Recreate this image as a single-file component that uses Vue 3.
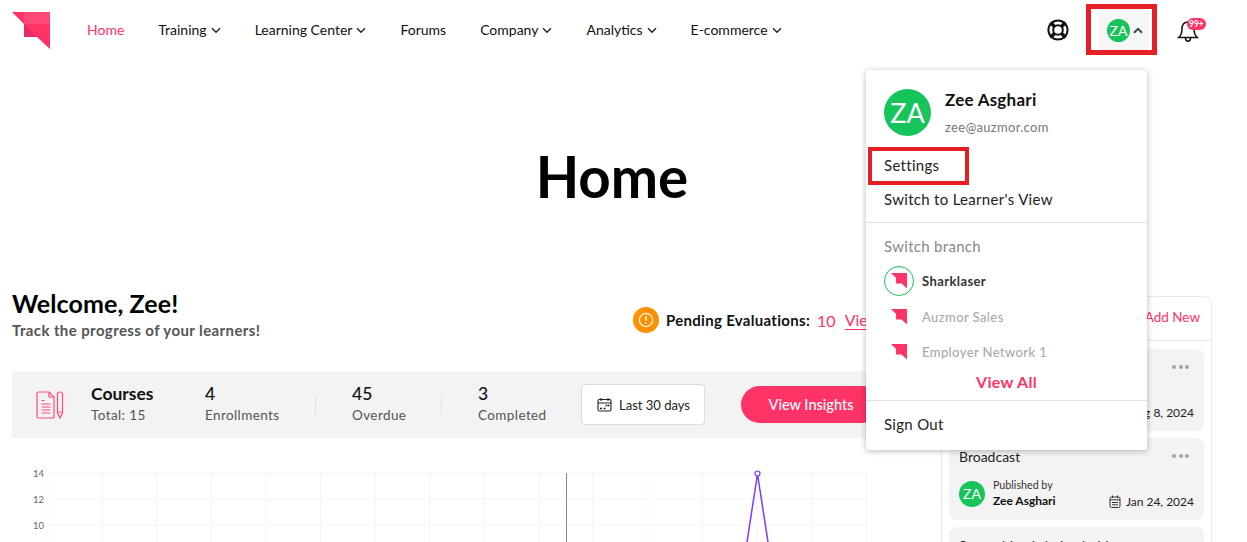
<script setup>
const menu = [
  { label: 'Home', active: true },
  { label: 'Training', arrow: true },
  { label: 'Learning Center', arrow: true },
  { label: 'Forums' },
  { label: 'Company', arrow: true },
  { label: 'Analytics', arrow: true },
  { label: 'E-commerce', arrow: true },
]

const stats = [
  { value: '4', label: 'Enrollments', cls: 's1' },
  { value: '45', label: 'Overdue', cls: 's2' },
  { value: '3', label: 'Completed', cls: 's3' },
]

const posts = [
  { title: 'Announcement', date: 'Aug 8, 2024' },
  { title: 'Broadcast', date: 'Jan 24, 2024' },
  { title: 'Some thing is being held', date: 'Jan 12, 2024' },
]

const xLines = [48, 102.5, 157, 211, 266, 320.5, 375, 429.5, 484, 539, 593, 648, 702.5, 757, 812, 866.5]
const yLines = [473, 499, 525]
const yLabels = [
  { y: 477, t: '14' },
  { y: 503, t: '12' },
  { y: 529, t: '10' },
]
</script>

<template>
  <div class="page">
    <header class="nav">
      <svg class="logo" width="38" height="38" viewBox="0 0 38 38">
        <polygon points="0,0 38,0 38,37 25,25 12,25 12,12" fill="#ff3366" />
        <polygon points="12,0 38,0 38,12 12,12" fill="#ff4a78" />
        <polygon points="12,12 25,25 12,25" fill="#e52c68" />
      </svg>
      <nav class="menu">
        <a v-for="m in menu" :key="m.label" class="menu-item" :class="{ active: m.active }">
          {{ m.label }}
          <svg v-if="m.arrow" width="10" height="7" viewBox="0 0 10 7"><path d="M1 1.200l4 4 4-4" fill="none" stroke="#222" stroke-width="1.400" /></svg>
        </a>
      </nav>
      <div class="tools">
        <svg class="buoy" width="22" height="22" viewBox="0 0 22 22" fill="none" stroke="#111" stroke-width="2">
          <circle cx="11" cy="11" r="9.600" />
          <circle cx="11" cy="11" r="4.800" />
          <path d="M3.500 3.500l4 4M18.500 3.500l-4 4M3.500 18.500l4-4M18.500 18.500l-4-4" stroke-width="3.600" />
        </svg>
        <div class="account">
          <span class="avatar small">ZA</span>
          <svg width="10" height="7" viewBox="0 0 10 7"><path d="M1 5.800l4-4 4 4" fill="none" stroke="#444" stroke-width="2" /></svg>
          <span class="mark mark-account"></span>
        </div>
        <div class="bell">
          <svg width="22" height="26" viewBox="0 0 22 26" fill="none" stroke="#111" stroke-width="1.500">
            <path d="M11 3C6.800 3 5 6.200 5 10c0 4-1 6.500-3.300 8.500h18.600C18 16.500 17 14 17 10c0-3.800-1.800-7-6-7z" />
            <path d="M8.500 19c0 2 1.100 3.200 2.500 3.200s2.500-1.200 2.500-3.200" />
          </svg>
          <span class="badge">99+</span>
        </div>
      </div>
    </header>

    <h1 class="title">Home</h1>

    <main class="content">
      <section class="left">
        <div class="welcome">
          <div>
            <h2>Welcome, Zee!</h2>
            <p>Track the progress of your learners!</p>
          </div>
          <div class="pending">
            <span class="warn">
              <svg width="16" height="16" viewBox="0 0 16 16" fill="none" stroke="#fff" stroke-width="1.200">
                <circle cx="8" cy="8" r="6.600" />
                <path d="M8 4.200v4.600M8 10.600v1.200" stroke-width="1.500" />
              </svg>
            </span>
            <b>Pending Evaluations:</b>
            <span class="count">10</span>
            <a class="view">View All</a>
          </div>
        </div>

        <div class="banner">
          <svg class="doc" width="28" height="28" viewBox="0 0 28 28" fill="none" stroke="#ff4d78" stroke-width="1.200">
            <path d="M1 2.500Q1 1 2.500 1H13l5 5v20q0 1-1 1H2.500Q1 27 1 25.500z" />
            <path d="M13 1v5h5" />
            <path d="M5.500 9.500h3M5.500 13h9M5.500 16h9M5.500 19h9M5.500 22h9" />
            <path d="M21.500 3q0-2 2.500-2t2.500 2v19l-2.500 5-2.500-5zM21.500 21h5" />
          </svg>
          <div class="total">
            <strong>Courses</strong>
            <span>Total: 15</span>
          </div>
          <div v-for="s in stats" :key="s.label" class="stat" :class="s.cls">
            <strong>{{ s.value }}</strong>
            <span>{{ s.label }}</span>
          </div>
          <button class="range">
            <svg width="15" height="15" viewBox="0 0 15 15" fill="none" stroke="#222" stroke-width="1.100">
              <rect x="1" y="2.500" width="13" height="11.500" rx="1.500" />
              <path d="M1 6h13M4 1v3M11 1v3" />
              <path d="M3 11.500h2M6.500 11.500h2M8.500 8.500h2M11 8.500h1.500" stroke-width="1.400" />
            </svg>
            Last 30 days
          </button>
          <button class="insights">View Insights</button>
        </div>

        <svg class="chart" width="917" height="92" viewBox="12 463 917 92">
          <line v-for="x in xLines" :key="x" :x1="x" :x2="x" y1="473" y2="555" stroke="#f4f4f4" />
          <line v-for="y in yLines" :key="y" x1="48" x2="867" :y1="y" :y2="y" stroke="#f4f4f4" />
          <line x1="566.500" x2="566.500" y1="473" y2="555" stroke="#888" />
          <text v-for="l in yLabels" :key="l.t" x="44" :y="l.y" text-anchor="end" class="tick">{{ l.t }}</text>
          <path d="M745 555L757.500 474L770 555" fill="none" stroke="#7c3aff" stroke-width="1.500" />
          <circle cx="757.500" cy="473.500" r="2.500" fill="#fff" stroke="#7c3aff" stroke-width="1.200" />
        </svg>
      </section>

      <aside class="panel">
        <div class="panel-head"><a>Add New</a></div>
        <div class="cards">
          <article v-for="p in posts" :key="p.title" class="card">
            <div class="card-top">
              <span>{{ p.title }}</span>
              <i class="dots"><b></b><b></b><b></b></i>
            </div>
            <div class="card-foot">
              <span class="avatar tiny">ZA</span>
              <div class="by">
                <small>Published by</small>
                <strong>Zee Asghari</strong>
              </div>
              <div class="date">
                <svg width="12" height="13" viewBox="0 0 12 13" fill="none" stroke="#333" stroke-width="1">
                  <rect x="1" y="2" width="10" height="10.500" rx="1.500" />
                  <path d="M1 4.800h10M3.500 .5v2.500M8.500 .5v2.500M3 7.500h6M3 9.800h6" />
                </svg>
                {{ p.date }}
              </div>
            </div>
          </article>
        </div>
      </aside>
    </main>

    <div class="dropdown">
      <div class="who">
        <span class="avatar big">ZA</span>
        <div>
          <div class="who-name">Zee Asghari</div>
          <div class="who-mail">zee@auzmor.com</div>
        </div>
      </div>
      <a class="row settings">Settings<span class="mark mark-settings"></span></a>
      <a class="row">Switch to Learner's View</a>
      <hr />
      <div class="row muted">Switch branch</div>
      <div class="branch current">
        <span class="branch-logo ring">
          <svg width="16" height="16" viewBox="0 0 38 38"><polygon points="0,0 38,0 38,37 25,25 12,25 12,12" fill="#ff3366" /></svg>
        </span>
        Sharklaser
      </div>
      <div class="branch">
        <span class="branch-logo">
          <svg width="16" height="16" viewBox="0 0 38 38"><polygon points="0,0 38,0 38,37 25,25 12,25 12,12" fill="#ff3366" /></svg>
        </span>
        Auzmor Sales
      </div>
      <div class="branch">
        <span class="branch-logo">
          <svg width="16" height="16" viewBox="0 0 38 38"><polygon points="0,0 38,0 38,37 25,25 12,25 12,12" fill="#ff3366" /></svg>
        </span>
        Employer Network 1
      </div>
      <a class="view-all">View All</a>
      <hr class="tight" />
      <a class="row signout">Sign Out</a>
    </div>
  </div>
</template>

<style scoped>
.page {
  position: relative;
  height: 542px;
  overflow: hidden;
  background: #fff;
  color: #111;
  font-family: Lato, "Open Sans", sans-serif;
  font-size: 14px;
}

.nav {
  display: flex;
  align-items: center;
  height: 60px;
  padding: 0 41px 0 12px;
}
.logo {
  margin-top: 1px;
}
.menu {
  display: flex;
  gap: 34px;
  margin-left: 37px;
  margin-bottom: 2px;
}
.menu-item {
  display: flex;
  align-items: center;
  gap: 4px;
  color: #111;
}
.menu-item svg {
  margin-top: 2px;
}
.menu-item.active {
  color: #ff3366;
}
.tools {
  display: flex;
  align-items: center;
  margin-left: auto;
}
.buoy {
  margin-right: 30px;
}
.account {
  position: relative;
  display: flex;
  align-items: center;
  gap: 3px;
  width: 50px;
  height: 42px;
  padding-left: 8px;
  box-sizing: border-box;
  background: #f6f6f6;
  border-radius: 5px;
}
.mark {
  position: absolute;
  border: 5px solid #e81e25;
  box-sizing: border-box;
}
.mark-account {
  left: -13px;
  top: -5px;
  width: 71px;
  height: 51px;
}
.bell {
  position: relative;
  display: flex;
  margin-top: 3px;
  margin-left: 28px;
  width: 29px;
}
.badge {
  position: absolute;
  left: 9.500px;
  top: -1px;
  padding: 0 2.500px;
  height: 12px;
  line-height: 12px;
  background: #ff3366;
  border-radius: 6px;
  color: #fff;
  font-size: 8.500px;
  font-weight: 700;
}

.avatar {
  display: inline-flex;
  flex-shrink: 0;
  align-items: center;
  justify-content: center;
  background: #16c45a;
  border-radius: 50%;
  color: #fff;
}
.avatar.small {
  width: 23px;
  height: 23px;
  font-size: 14px;
}
.avatar.tiny {
  width: 26px;
  height: 26px;
  font-size: 14px;
}
.avatar.big {
  width: 47px;
  height: 47px;
  font-size: 27px;
}

.title {
  width: 1224px;
  margin: 0;
  padding: 82px 0 77px;
  text-align: center;
  font-size: 56.500px;
  line-height: 68px;
  font-weight: 700;
  color: #000;
}

.content {
  display: flex;
  gap: 12px;
  padding: 0 35px 0 12px;
}
.left {
  width: 917px;
  flex-shrink: 0;
}
.welcome {
  display: flex;
  justify-content: space-between;
  align-items: flex-start;
  height: 84px;
}
.welcome h2 {
  margin: 0;
  padding-top: 1px;
  font-size: 25px;
  letter-spacing: 0.1px;
  line-height: 30px;
  font-weight: 700;
  color: #000;
}
.welcome p {
  margin: 2px 0 0;
  font-size: 15px;
  letter-spacing: 0.4px;
  font-weight: 700;
  line-height: 20px;
  color: #555;
}
.pending {
  display: flex;
  align-items: center;
  gap: 7px;
  width: 296px;
  margin-top: 20px;
  font-size: 15px;
}
.pending b {
  color: #111;
  letter-spacing: 0.3px;
}
.warn {
  display: flex;
  align-items: center;
  justify-content: center;
  width: 26px;
  height: 26px;
  background: #ff9100;
  border-radius: 50%;
}
.count {
  color: #ff3366;
  font-size: 16px;
}
.view {
  margin-left: 2px;
  color: #ff3366;
  font-size: 16px;
  border-bottom: 1px solid #ff3366;
  white-space: nowrap;
}

.banner {
  display: flex;
  align-items: center;
  height: 67px;
  padding-left: 24px;
  background: #f3f3f3;
}
.doc {
  flex-shrink: 0;
}
.total,
.stat {
  display: flex;
  flex-direction: column;
  gap: 3px;
  margin-bottom: 2px;
  box-sizing: border-box;
}
.total {
  width: 114px;
  margin-left: 27px;
}
.total strong,
.stat strong {
  font-size: 17.500px;
  line-height: 20px;
  font-weight: 500;
  color: #111;
}
.total strong {
  font-weight: 700;
}
.total span,
.stat span {
  font-size: 13.500px;
  letter-spacing: 0.4px;
  line-height: 17px;
  color: #555;
}
.s1 {
  width: 110px;
}
.s2,
.s3 {
  position: relative;
  padding-left: 37px;
}
.s2::before,
.s3::before {
  content: "";
  position: absolute;
  left: 0;
  top: 11px;
  height: 20px;
  border-left: 1px solid #e2e2e2;
}
.s2 {
  width: 126px;
}
.s3 {
  width: 140px;
}
.range {
  display: flex;
  align-items: center;
  gap: 7px;
  width: 124px;
  height: 41px;
  padding: 0 0 0 15px;
  background: #fff;
  border: 1px solid #dcdcdc;
  border-radius: 4px;
  color: #222;
  font: 13px Lato, sans-serif;
}
.insights {
  width: 140px;
  height: 37px;
  margin-left: 36px;
  padding: 0;
  background: #ff3366;
  border: 0;
  border-radius: 19px;
  color: #fff;
  font: 500 14.500px Lato, sans-serif;
}
.chart {
  display: block;
  margin-top: 25px;
}
.tick {
  font-size: 9.500px;
  fill: #666;
  font-family: Lato, sans-serif;
}

.panel {
  width: 271px;
  height: 400px;
  margin-top: 9px;
  box-sizing: border-box;
  border: 1px solid #e9e9e9;
  border-radius: 9px;
}
.panel-head {
  display: flex;
  align-items: center;
  justify-content: flex-end;
  height: 44px;
  padding: 0 11px 3px 0;
  box-sizing: border-box;
  border-bottom: 1px solid #e9e9e9;
  color: #ff3366;
  font-size: 13.500px;
}
.cards {
  display: flex;
  flex-direction: column;
  gap: 7px;
  padding: 8px 7px 0;
}
.card {
  height: 82px;
  padding: 9px 10px 0;
  box-sizing: border-box;
  background: #f3f3f3;
  border-radius: 8px;
}
.card-top {
  display: flex;
  justify-content: space-between;
  align-items: center;
  padding-right: 5px;
  height: 18px;
  font-size: 14px;
  color: #222;
}
.dots {
  display: flex;
  gap: 2.500px;
}
.dots b {
  width: 4px;
  height: 4px;
  background: #a5a5a5;
  border-radius: 50%;
}
.card-foot {
  display: flex;
  align-items: center;
  margin-top: 13px;
}
.by {
  display: flex;
  flex-direction: column;
  margin-left: 8px;
}
.by small {
  font-size: 10.700px;
  line-height: 14px;
  color: #333;
}
.by strong {
  font-size: 12px;
  line-height: 17px;
  font-weight: 700;
  color: #111;
}
.date {
  display: flex;
  align-items: center;
  gap: 5px;
  margin-left: auto;
  margin-top: 15px;
  font-size: 12px;
  color: #222;
}

.dropdown {
  position: absolute;
  left: 866px;
  top: 70px;
  width: 281px;
  height: 380px;
  background: #fff;
  border-radius: 3px;
  box-shadow: 0 1px 6px rgba(0, 0, 0, 0.28);
  color: #222;
}
.who {
  display: flex;
  gap: 14px;
  padding: 19px 18px 0;
  height: 59px;
}
.who-name {
  font-size: 17px;
  letter-spacing: 0.25px;
  line-height: 22px;
  font-weight: 700;
  color: #111;
}
.who-mail {
  margin-top: 8px;
  font-size: 13px;
  letter-spacing: 0.3px;
  line-height: 16px;
  color: #777;
}
.row {
  display: block;
  position: relative;
  height: 34px;
  line-height: 34px;
  padding-left: 18px;
  font-size: 15px;
  letter-spacing: 0.3px;
}
.mark-settings {
  left: 2px;
  top: -1px;
  width: 101px;
  height: 38px;
  border-width: 4.500px;
}
.dropdown hr {
  margin: 6px 0 0;
  border: 0;
  border-top: 1px solid #e0e0e0;
}
.muted {
  margin-top: 6px;
  margin-bottom: -1px;
  color: #888;
}
.branch {
  display: flex;
  align-items: center;
  gap: 8px;
  height: 35px;
  padding-left: 18px;
  font-size: 13px;
  letter-spacing: 0.4px;
  font-weight: 500;
  color: #aaa;
}
.branch.current {
  height: 37px;
  font-weight: 700;
  color: #333;
}
.branch-logo {
  display: flex;
  align-items: center;
  justify-content: center;
  width: 30px;
  height: 30px;
  box-sizing: border-box;
}
.ring {
  border: 1px solid #16c45a;
  border-radius: 50%;
}
.view-all {
  display: block;
  margin-top: 1px;
  text-align: center;
  color: #ff3366;
  font-size: 16px;
  letter-spacing: 0.3px;
  font-weight: 700;
  line-height: 24px;
}
.signout {
  margin-top: 6px;
}
</style>

<style>
html,
body {
  overflow: hidden;
}
</style>
